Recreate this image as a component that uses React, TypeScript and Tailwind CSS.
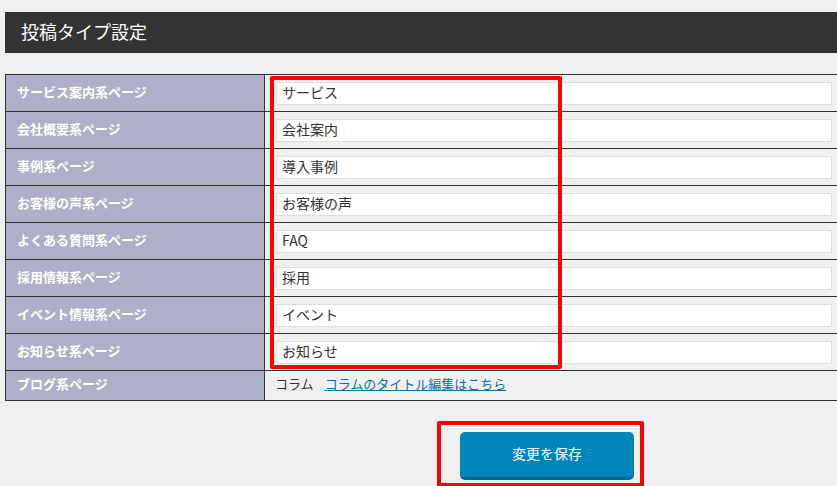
import React from 'react';

const rows = [
    { label: 'サービス案内系ページ', value: 'サービス' },
    { label: '会社概要系ページ', value: '会社案内' },
    { label: '事例系ページ', value: '導入事例' },
    { label: 'お客様の声系ページ', value: 'お客様の声' },
    { label: 'よくある質問系ページ', value: 'FAQ' },
    { label: '採用情報系ページ', value: '採用' },
    { label: 'イベント情報系ページ', value: 'イベント' },
    { label: 'お知らせ系ページ', value: 'お知らせ' },
];

const App = () => {
    return (
        <div
            className="relative w-[837px] h-[486px] overflow-hidden bg-[#f0f0f0] text-[#333]"
            style={{ fontFamily: '"Noto Sans CJK JP", "Liberation Sans", sans-serif' }}
        >
            <div className="pt-[12px] pl-[5px]">
                <h1 className="h-[41px] w-[840px] bg-[#333] text-white text-[18px] leading-[39px] pl-[16px] font-normal">
                    投稿タイプ設定
                </h1>
            </div>

            <div className="pt-[21px] pl-[5px]">
                <table className="w-[840px] border-collapse border border-[#333] table-fixed">
                    <colgroup>
                        <col className="w-[259px]" />
                        <col />
                    </colgroup>
                    <tbody>
                        {rows.map((row) => (
                            <tr key={row.label} className="h-[37px]">
                                <th className="border border-[#333] bg-[#aeb0c7] text-left text-white text-[13px] leading-[16px] font-bold pl-[11px] pt-0 pb-[3px]">
                                    {row.label}
                                </th>
                                <td className="border border-[#333] pl-[11px] py-0">
                                    <input
                                        type="text"
                                        defaultValue={row.value}
                                        className="block w-[556px] h-[23px] bg-white border border-[#dddddd] px-[5px] pt-0 pb-[3px] leading-[18px] text-[14px] text-[#333] outline-none"
                                        style={{ fontFamily: '"Noto Sans CJK JP", "Liberation Sans", sans-serif' }}
                                    />
                                </td>
                            </tr>
                        ))}
                        <tr className="h-[30px]">
                            <th className="border border-[#333] bg-[#aeb0c7] text-left text-white text-[13px] leading-[16px] font-bold pl-[11px] pt-0 pb-[3px]">
                                ブログ系ページ
                            </th>
                            <td className="border border-[#333] pl-[10px] pt-0 pb-[3px] text-[13px] leading-[16px] text-[#333]">
                                コラム
                                <a href="#" className="ml-[11px] text-[#0073aa] underline">
                                    コラムのタイトル編集はこちら
                                </a>
                            </td>
                        </tr>
                    </tbody>
                </table>
            </div>

            <div className="pt-[31px] pl-[460px]">
                <button className="w-[174px] h-[48px] rounded-[5px] bg-[#0085ba] border-b-[3px] border-[#006799] text-white text-[14px] pb-[2px]">
                    変更を保存
                </button>
            </div>

            {/* highlight boxes */}
            <div className="absolute left-[270px] top-[76px] w-[292px] h-[293px] border-[4px] border-[#ff0000] rounded-[2px]" />
            <div className="absolute left-[437px] top-[421px] w-[207px] h-[66px] border-[4px] border-[#ff0000] rounded-[2px]" />
        </div>
    );
};

export default App;
